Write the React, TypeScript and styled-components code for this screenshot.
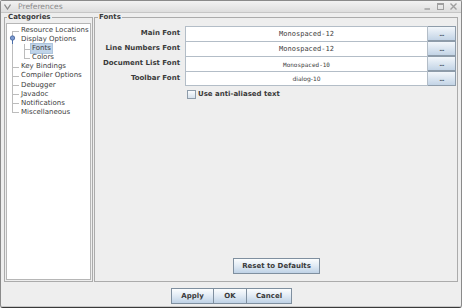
import React from "react";
import styled, { createGlobalStyle } from "styled-components";

const GlobalStyle = createGlobalStyle`
  html, body {
    margin: 0;
    padding: 0;
    background: #eeeeee;
  }
  body {
    font-family: "DejaVu Sans", "Liberation Sans", sans-serif;
    color: #3a3a3a;
  }
  * {
    box-sizing: border-box;
  }
`;

type TreeItem = { label: string; children?: string[]; selected?: string };

const categories: TreeItem[] = [
  { label: "Resource Locations" },
  { label: "Display Options", children: ["Fonts", "Colors"], selected: "Fonts" },
  { label: "Key Bindings" },
  { label: "Compiler Options" },
  { label: "Debugger" },
  { label: "Javadoc" },
  { label: "Notifications" },
  { label: "Miscellaneous" },
];

const fontRows = [
  { label: "Main Font", value: "Monospaced-12", family: "mono", size: 7 },
  { label: "Line Numbers Font", value: "Monospaced-12", family: "mono", size: 7 },
  { label: "Document List Font", value: "Monospaced-10", family: "mono", size: 6 },
  { label: "Toolbar Font", value: "dialog-10", family: "sans", size: 6 },
];

const App = () => {
  return (
    <>
      <GlobalStyle />
      <Window>
        <TitleBar>
          <svg width="7" height="6" viewBox="0 0 7 6">
            <path d="M0.5 0.5 L3.5 5 L6.5 0.5" fill="none" stroke="#8c8c8c" strokeWidth="1.3" />
          </svg>
          <Title>Preferences</Title>
          <TitleButtons>
            <svg width="7" height="7" viewBox="0 0 7 7">
              <path d="M0.5 6 H6" stroke="#a0a0a0" strokeWidth="1.4" />
            </svg>
            <svg width="7" height="7" viewBox="0 0 7 7">
              <rect x="0.5" y="0.5" width="6" height="6" fill="none" stroke="#a0a0a0" />
              <path d="M0.5 1.5 H6.5" stroke="#a0a0a0" strokeWidth="1.2" />
            </svg>
            <svg width="7" height="7" viewBox="0 0 7 7">
              <path d="M0.5 0.5 L6.5 6.5 M6.5 0.5 L0.5 6.5" stroke="#a0a0a0" strokeWidth="1.4" />
            </svg>
          </TitleButtons>
        </TitleBar>

        <Main>
          <CategoriesBox>
            <Legend>Categories</Legend>
            <Tree>
              {categories.map((item, i) => {
                const isFirst = i === 0;
                const isLast = i === categories.length - 1;
                return (
                  <React.Fragment key={item.label}>
                    <TreeRow>
                      <Gutter
                        $w={13}
                        $x={5}
                        $from={isFirst ? "mid" : "top"}
                        $to={isLast ? "mid" : "bottom"}
                        $stub={!item.children}
                      >
                        {item.children && (
                          <Handle width="7" height="9" viewBox="0 0 7 9">
                            <path d="M3.5 4 V9" stroke="#4a6da8" strokeWidth="1" />
                            <circle cx="3.5" cy="3" r="2.2" fill="#7d9ad0" stroke="#3f5f99" strokeWidth="0.8" />
                          </Handle>
                        )}
                      </Gutter>
                      <NodeLabel>{item.label}</NodeLabel>
                    </TreeRow>
                    {item.children?.map((child, j) => (
                      <TreeRow key={child}>
                        <Gutter $w={13} $x={5} $from="top" $to="bottom" $stub={false} />
                        <Gutter
                          $w={11}
                          $x={4}
                          $from="top"
                          $to={j === item.children!.length - 1 ? "mid" : "bottom"}
                          $stub
                        />
                        <NodeLabel $selected={item.selected === child}>{child}</NodeLabel>
                      </TreeRow>
                    ))}
                  </React.Fragment>
                );
              })}
            </Tree>
          </CategoriesBox>

          <FontsBox>
            <Legend>Fonts</Legend>
            <FontGrid>
              {fontRows.map((row, i) => (
                <React.Fragment key={row.label}>
                  <FieldLabel>{row.label}</FieldLabel>
                  <FontField $mono={row.family === "mono"} $size={row.size} $last={i === fontRows.length - 1}>
                    {row.value}
                  </FontField>
                  <DotsButton>...</DotsButton>
                </React.Fragment>
              ))}
            </FontGrid>
            <CheckRow>
              <CheckBox />
              <CheckText>Use anti-aliased text</CheckText>
            </CheckRow>
            <Spacer />
            <PushButton $w={87}>Reset to Defaults</PushButton>
          </FontsBox>
        </Main>

        <ButtonBar>
          <PushButton $w={43}>Apply</PushButton>
          <PushButton $w={34} $joined>OK</PushButton>
          <PushButton $w={46} $joined>Cancel</PushButton>
        </ButtonBar>
      </Window>
    </>
  );
};

const Window = styled.div`
  width: 462px;
  height: 308px;
  border: 1px solid #8a8a8a;
  border-bottom-color: #3a3a3a;
  border-radius: 2px 2px 3px 3px;
  background: #eeeeee;
  display: flex;
  flex-direction: column;
  overflow: hidden;
`;

const TitleBar = styled.div`
  height: 12px;
  flex: none;
  display: flex;
  align-items: center;
  padding: 0 4px 0 3px;
  background: linear-gradient(#f2f2f2, #dedede);
  border-bottom: 1px solid #c6c6c6;
`;

const Title = styled.span`
  margin-left: 7px;
  font-size: 7.6px;
  line-height: 11px;
  color: #8a8a8a;
`;

const TitleButtons = styled.div`
  margin-left: auto;
  display: flex;
  align-items: center;
  gap: 6px;
`;

const Main = styled.div`
  flex: 1;
  display: flex;
  gap: 1px;
  padding: 0 3px;
  min-height: 0;
`;

const Box = styled.fieldset`
  margin: 0;
  min-width: 0;
  border: 1px solid #ababab;
  display: flex;
  flex-direction: column;
`;

const CategoriesBox = styled(Box)`
  width: 89px;
  flex: none;
  padding: 1px;
`;

const FontsBox = styled(Box)`
  flex: 1;
  padding: 4px 1px 7px 2px;
`;

const Legend = styled.legend`
  margin-left: 1px;
  padding: 0 1px;
  font-size: 7px;
  line-height: 9px;
  font-weight: bold;
  color: #3a3a3a;
`;

const Tree = styled.div`
  flex: 1;
  background: #ffffff;
  border: 1px solid #b6b6b6;
  padding-top: 2px;
`;

const TreeRow = styled.div`
  height: 9.1px;
  display: flex;
  align-items: stretch;
`;

const Gutter = styled.span<{
  $w: number;
  $x: number;
  $from: "top" | "mid";
  $to: "bottom" | "mid";
  $stub: boolean;
}>`
  position: relative;
  flex: none;
  width: ${({ $w }) => $w}px;
  display: flex;
  align-items: center;

  &::before {
    content: "";
    position: absolute;
    left: ${({ $x }) => $x}px;
    top: ${({ $from }) => ($from === "top" ? "0" : "50%")};
    bottom: ${({ $to }) => ($to === "bottom" ? "0" : "50%")};
    border-left: 1px solid #bcbcbc;
  }

  &::after {
    content: "";
    display: ${({ $stub }) => ($stub ? "block" : "none")};
    position: absolute;
    left: ${({ $x }) => $x}px;
    top: 50%;
    width: ${({ $w, $x }) => $w - $x - 1}px;
    border-top: 1px solid #bcbcbc;
  }
`;

const Handle = styled.svg`
  position: relative;
  z-index: 1;
  margin-left: 2px;
`;

const NodeLabel = styled.span<{ $selected?: boolean }>`
  padding: 0 1px;
  font-size: 7px;
  line-height: 9px;
  white-space: nowrap;
  color: #404040;
  background: ${({ $selected }) => ($selected ? "#c0d4e9" : "transparent")};
  outline: ${({ $selected }) => ($selected ? "1px solid #adc4dc" : "none")};
`;

const FontGrid = styled.div`
  display: grid;
  grid-template-columns: 88px 1fr 28px;
  grid-auto-rows: 15px;
`;

const FieldLabel = styled.span`
  padding-right: 5px;
  text-align: right;
  font-size: 7px;
  font-weight: bold;
  line-height: 15px;
  white-space: nowrap;
  color: #3a3a3a;
`;

const FontField = styled.div<{ $mono: boolean; $size: number; $last: boolean }>`
  background: #ffffff;
  border: 1px solid #b3bdc7;
  border-bottom: ${({ $last }) => ($last ? "1px solid #b3bdc7" : "none")};
  display: flex;
  align-items: center;
  justify-content: center;
  font-family: ${({ $mono }) =>
    $mono ? '"DejaVu Sans Mono", "Liberation Mono", monospace' : '"DejaVu Sans", sans-serif'};
  font-size: ${({ $size }) => $size}px;
  color: #404040;
`;

const DotsButton = styled.button`
  margin: 0;
  padding: 0;
  border: 1px solid #8e9caa;
  border-left: none;
  background: linear-gradient(#f3f7fb, #c3d4e6);
  font-family: "DejaVu Sans", sans-serif;
  font-size: 6px;
  font-weight: bold;
  letter-spacing: -0.8px;
  color: #4a5a6a;
  line-height: 1;
`;

const CheckRow = styled.label`
  margin-top: 3px;
  padding-left: 90px;
  height: 10px;
  display: flex;
  align-items: center;
`;

const CheckBox = styled.span`
  width: 9px;
  height: 9px;
  border: 1px solid #8e9caa;
  background: linear-gradient(#fafcfe, #d6e1ec);
`;

const CheckText = styled.span`
  margin-left: 2px;
  font-size: 7px;
  font-weight: bold;
  color: #3a3a3a;
`;

const Spacer = styled.div`
  flex: 1;
`;

const PushButton = styled.button<{ $w: number; $joined?: boolean }>`
  width: ${({ $w }) => $w}px;
  height: 16px;
  margin: 0 0 0 ${({ $joined }) => ($joined ? "-1px" : "0")};
  padding: 0;
  align-self: center;
  border: 1px solid #7f8f9f;
  background: linear-gradient(#fbfdfe, #e3ecf5 45%, #bfd2e6);
  font-family: "DejaVu Sans", sans-serif;
  font-size: 7px;
  font-weight: bold;
  color: #3a3a3a;
  line-height: 14px;
`;

const ButtonBar = styled.div`
  height: 25px;
  flex: none;
  display: flex;
  justify-content: center;
  align-items: flex-start;
  padding-top: 4px;
  padding-left: 1px;
  border-bottom: 1px solid #c8c8c8;
`;

export default App;
